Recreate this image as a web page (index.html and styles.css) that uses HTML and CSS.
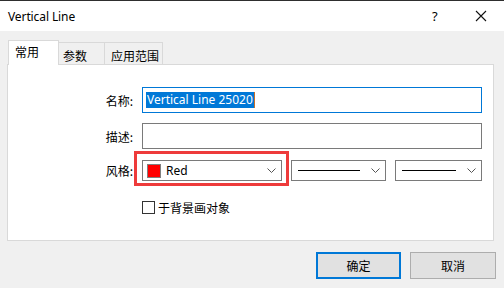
FILE: index.html
```html
<!DOCTYPE html>
<html>
<head>
<meta charset="utf-8">
<link rel="stylesheet" href="styles.css">
</head>
<body>
<div class="window">
  <div class="titlebar">
    <span class="title">Vertical Line</span>
    <span class="help">?</span>
    <svg class="close" width="12" height="12" viewBox="0 0 12 12"><path d="M1 1L11 11M11 1L1 11" stroke="#111" stroke-width="1.1" fill="none"/></svg>
  </div>
  <div class="body">
    <div class="tabs">
      <div class="tab active">常用</div>
      <div class="tab t2">参数</div>
      <div class="tab t3">应用范围</div>
    </div>
    <div class="panel">
      <div class="form">
        <label class="lbl gap">名称:</label>
        <div class="input focus"><span class="sel">Vertical Line 25020</span><span class="caret"></span></div>
        <label class="lbl gap">描述:</label>
        <div class="input"></div>
        <label class="lbl">风格:</label>
        <div class="combos">
          <div class="combo c1">
            <span class="swatch"></span><span class="ctext">Red</span>
            <svg class="chev" width="9" height="5" viewBox="0 0 9 5"><path d="M0.5 0.5L4.5 4.5L8.5 0.5" stroke="#555" fill="none"/></svg>
          </div>
          <div class="combo c2">
            <span class="line"></span>
            <svg class="chev" width="9" height="5" viewBox="0 0 9 5"><path d="M0.5 0.5L4.5 4.5L8.5 0.5" stroke="#555" fill="none"/></svg>
          </div>
          <div class="combo c3">
            <span class="line"></span>
            <svg class="chev" width="9" height="5" viewBox="0 0 9 5"><path d="M0.5 0.5L4.5 4.5L8.5 0.5" stroke="#555" fill="none"/></svg>
          </div>
        </div>
        <span></span>
        <div class="check"><span class="box"></span><span>于背景画对象</span></div>
      </div>
    </div>
    <div class="buttons">
      <div class="btn default">确定</div>
      <div class="btn">取消</div>
    </div>
  </div>
</div>
</body>
</html>
```
FILE: styles.css
```css
* { box-sizing: border-box; }
html, body { margin: 0; padding: 0; }
body {
  width: 504px;
  height: 288px;
  overflow: hidden;
  font-family: "Noto Sans", "Noto Sans CJK SC", sans-serif;
  font-size: 12px;
  color: #000;
  background: #f0f0f0;
}
.window { width: 504px; height: 288px; display: flex; flex-direction: column; }
.titlebar {
  height: 31px;
  border-top: 1px solid #2e2e2e;
  background: #fff;
  display: flex;
  align-items: center;
  padding-left: 8px;
}
.title { font-size: 12px; flex: 1; letter-spacing: -0.1px; }
.help { font-size: 13px; width: 12px; margin-right: 31px; }
.close { margin-right: 17px; }
.body { flex: 1; background: #f0f0f0; display: flex; flex-direction: column; }
.tabs {
  display: flex;
  align-items: flex-end;
  padding-left: 8px;
  margin-top: 9px;
  height: 24px;
}
.tab {
  border: 1px solid #d9d9d9;
  border-bottom: none;
  height: 22px;
  display: flex;
  align-items: center;
  font-family: "Noto Sans CJK SC", sans-serif;
  font-size: 12px;
}
.tab.active {
  width: 51px;
  height: 25px;
  margin-bottom: -1px;
  background: #fff;
  position: relative;
  z-index: 1;
  padding-left: 6px;
  padding-bottom: 3px;
}
.tab.t2 { width: 47px; margin-left: -1px; padding-left: 4px; padding-top: 3px; }
.tab.t3 { width: 59px; margin-left: -1px; padding-left: 6px; padding-top: 3px; }
.panel {
  margin-left: 7px;
  width: 487px;
  height: 177px;
  background: #fff;
  border: 1px solid #d9d9d9;
  padding-top: 22px;
}
.form {
  display: grid;
  grid-template-columns: 127px 340px;
  column-gap: 7px;
  align-items: center;
}
.lbl {
  text-align: right;
  font-family: "Noto Sans CJK SC", sans-serif;
  font-size: 12px;
  margin-right: 2px;
}
.lbl.gap { margin-bottom: 10px; }
.input {
  height: 26px;
  border: 1px solid #7a7a7a;
  background: #fff;
  display: flex;
  align-items: center;
  padding-left: 3px;
  margin-bottom: 10px;
}
.input.focus { border-color: #0078d7; }
.sel {
  background: #0078d7;
  color: #fff;
  line-height: 16px;
  padding: 0 1px;
  font-size: 12px;
}
.caret { width: 1px; height: 16px; background: #c8702a; }
.combos {
  display: flex;
  gap: 9px;
  height: 21px;
  margin-top: 1px;
}
.combo {
  border: 1px solid #7a7a7a;
  background: #fff;
  height: 21px;
  display: flex;
  align-items: center;
  padding-right: 5px;
}
.c1 { width: 140px; padding-left: 4px; position: relative; }
.c1::after {
  content: "";
  position: absolute;
  left: -9px;
  right: -8px;
  top: -10px;
  bottom: -6px;
  border: 3px solid #ee3b3b;
}
.c2 { width: 96px; padding-left: 6px; }
.c3 { width: 87px; padding-left: 6px; }
.swatch {
  width: 14px;
  height: 14px;
  background: #ff0000;
  border: 1px solid #808080;
}
.ctext { flex: 1; margin-left: 5px; font-size: 12px; }
.line { flex: 1; height: 1px; background: #000; margin-right: 11px; }
.check {
  display: flex;
  align-items: center;
  margin-top: 18px;
  font-family: "Noto Sans CJK SC", sans-serif;
  font-size: 12px;
}
.box {
  width: 13px;
  height: 13px;
  border: 1px solid #333;
  margin-right: 3px;
}
.buttons {
  display: flex;
  justify-content: flex-end;
  gap: 9px;
  padding-right: 8px;
  margin-top: 11px;
}
.btn {
  width: 86px;
  height: 27px;
  border: 1px solid #adadad;
  background: #e1e1e1;
  display: flex;
  align-items: center;
  justify-content: center;
  font-family: "Noto Sans CJK SC", sans-serif;
  font-size: 12px;
}
.btn.default { border: 2px solid #0078d7; width: 85px; }
```
